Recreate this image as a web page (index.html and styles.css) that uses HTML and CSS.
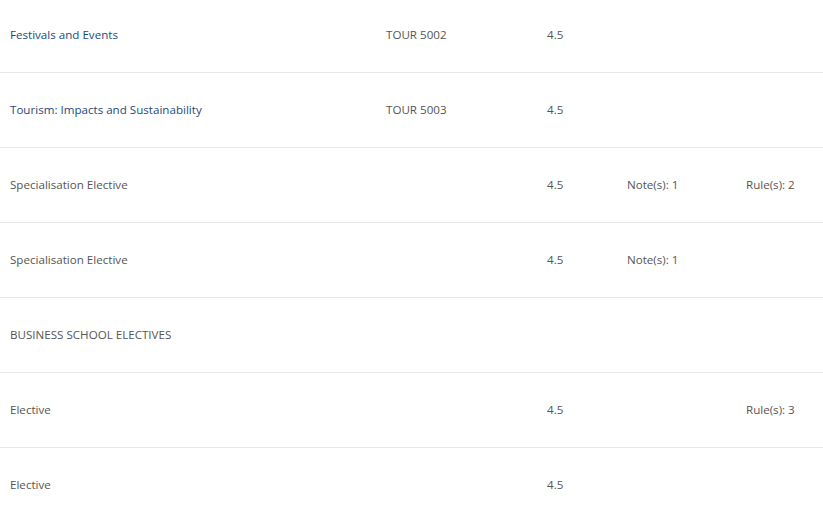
FILE: index.html
```html
<!DOCTYPE html>
<html>
<head>
<meta charset="utf-8">
<link rel="stylesheet" href="styles.css">
</head>
<body>
<div class="table">
  <div class="row">
    <div class="cell name"><a class="link" href="#">Festivals and Events</a></div>
    <div class="cell code">TOUR 5002</div>
    <div class="cell credit">4.5</div>
    <div class="cell note"></div>
    <div class="cell rule"></div>
  </div>
  <div class="row">
    <div class="cell name"><a class="link" href="#">Tourism: Impacts and Sustainability</a></div>
    <div class="cell code">TOUR 5003</div>
    <div class="cell credit">4.5</div>
    <div class="cell note"></div>
    <div class="cell rule"></div>
  </div>
  <div class="row">
    <div class="cell name">Specialisation Elective</div>
    <div class="cell code"></div>
    <div class="cell credit">4.5</div>
    <div class="cell note">Note(s): 1</div>
    <div class="cell rule">Rule(s): 2</div>
  </div>
  <div class="row">
    <div class="cell name">Specialisation Elective</div>
    <div class="cell code"></div>
    <div class="cell credit">4.5</div>
    <div class="cell note">Note(s): 1</div>
    <div class="cell rule"></div>
  </div>
  <div class="row">
    <div class="cell name">BUSINESS SCHOOL ELECTIVES</div>
    <div class="cell code"></div>
    <div class="cell credit"></div>
    <div class="cell note"></div>
    <div class="cell rule"></div>
  </div>
  <div class="row">
    <div class="cell name">Elective</div>
    <div class="cell code"></div>
    <div class="cell credit">4.5</div>
    <div class="cell note"></div>
    <div class="cell rule">Rule(s): 3</div>
  </div>
  <div class="row">
    <div class="cell name">Elective</div>
    <div class="cell code"></div>
    <div class="cell credit">4.5</div>
    <div class="cell note"></div>
    <div class="cell rule"></div>
  </div>
</div>
</body>
</html>
```
FILE: styles.css
```css
html, body {
  margin: 0;
  padding: 0;
  background: #ffffff;
}
body {
  font-family: "Open Sans", "Noto Sans", sans-serif;
  font-size: 11.6px;
  color: #555555;
  overflow: hidden;
}
.table {
  margin-top: -2px;
}
.row {
  display: flex;
  align-items: center;
  height: 74px;
  border-bottom: 1px solid #e8e8e8;
}
.cell {
  flex: none;
  line-height: 16px;
}
.name {
  width: 376px;
  padding-left: 10px;
}
.code {
  width: 161px;
}
.credit {
  width: 80px;
}
.note {
  width: 119px;
}
.rule {
  flex: 1;
}
.link {
  color: #1e4b7c;
  text-decoration: none;
}
```
